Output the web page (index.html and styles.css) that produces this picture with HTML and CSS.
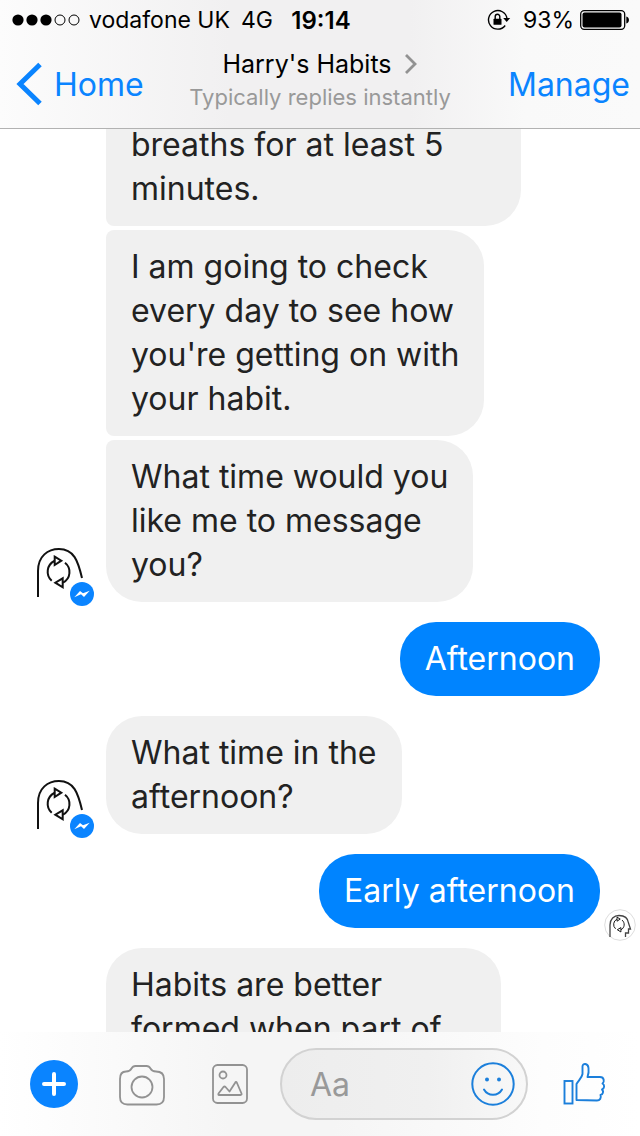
FILE: index.html
```html
<!DOCTYPE html>
<html lang="en">
<head>
<meta charset="utf-8">
<meta name="viewport" content="width=device-width">
<title>Harry's Habits</title>
<link rel="stylesheet" href="styles.css">
</head>
<body>
<svg class="defs" aria-hidden="true">
  <symbol id="cycle" viewBox="0 0 60 60">
    <g fill="none" stroke="#111" stroke-width="2">
      <path d="M15.7 34.7A12 12 0 0 1 18.3 15M29 16.7A12 12 0 0 1 27 36.7"/>
      <path fill="#fff" d="M18.7 10.7 25.3 14.7 18.7 19ZM26.7 32.3V41.3L19.3 36.7Z"/>
    </g>
  </symbol>
  <symbol id="avatar" viewBox="0 0 60 60">
    <path d="M2 51V25C2 10 12 3 23 3C38 3 42 15 46 32" fill="none" stroke="#111" stroke-width="2"/>
    <use href="#cycle" width="60" height="60"/>
    <circle cx="46" cy="48" r="12" fill="#0a84ff"/>
    <path d="M38.3 51.3 44 45 47 47.3 53.7 44.7 48 50.9 45 48.3Z" fill="#fff"/>
  </symbol>
</svg>

<header class="header">
  <div class="status">
    <div class="status-left">
      <svg width="68" height="12" viewBox="0 0 68 12" role="img" aria-label="Signal">
        <circle cx="6" cy="6" r="5.6"/><circle cx="20" cy="6" r="5.6"/><circle cx="34" cy="6" r="5.6"/>
        <circle cx="48" cy="6" r="5" fill="none" stroke="#000"/><circle cx="62" cy="6" r="5" fill="none" stroke="#000"/>
      </svg>
      <span>vodafone UK</span>
      <span class="network">4G</span>
    </div>
    <strong class="clock">19:14</strong>
    <div class="status-right">
      <svg width="24" height="22" viewBox="0 0 24 22" role="img" aria-label="Rotation lock">
        <path d="M18.2 16.5A9.3 9.3 0 1 1 20 9.5" fill="none" stroke="#000" stroke-width="1.4"/>
        <path d="M16.2 9H23.2L19.7 13Z"/>
        <rect x="6.5" y="9.8" width="8" height="6" rx=".6"/>
        <path d="M8.2 10V7.6a2.3 2.3 0 0 1 4.6 0V10" fill="none" stroke="#000" stroke-width="1.4"/>
      </svg>
      <span class="charge">93%</span>
      <svg width="50" height="20" viewBox="0 0 50 20" role="img" aria-label="Battery">
        <rect x=".7" y=".7" width="44" height="18.6" rx="3.5" fill="none" stroke="#000" stroke-width="1.3"/>
        <rect x="2.5" y="2.5" width="39" height="15" rx="2"/>
        <path d="M46.3 6.5C49.8 7 49.8 13 46.3 13.5Z"/>
      </svg>
    </div>
  </div>
  <nav class="nav">
    <a class="nav-link nav-start" href="#home">
      <svg width="26" height="44" viewBox="0 0 26 44" aria-hidden="true"><path d="M24 2.5 4 22 24 41.5" fill="none" stroke="#0a84ff" stroke-width="5"/></svg>
      Home
    </a>
    <div class="heading">
      <a class="title" href="#profile">Harry's Habits
        <svg width="14" height="22" viewBox="0 0 14 22" aria-hidden="true"><path d="M2 2 11 11 2 20" fill="none" stroke="#929292" stroke-width="2.8"/></svg>
      </a>
      <p class="subtitle">Typically replies instantly</p>
    </div>
    <a class="nav-link nav-end" href="#manage">Manage</a>
  </nav>
</header>

<main class="chat">
  <div class="thread">
    <div class="received">
      <div class="stack">
        <p class="bubble joined-top joined-bottom scrolled">breaths for at least 5<br>minutes.</p>
        <p class="bubble joined-top joined-bottom">I am going to check<br>every day to see how<br>you're getting on with<br>your habit.</p>
        <p class="bubble joined-top">What time would you<br>like me to message<br>you?</p>
      </div>
      <svg class="avatar" role="img" aria-label="Harry's Habits"><use href="#avatar"/></svg>
    </div>
    <div class="sent"><p class="bubble bubble-sent">Afternoon</p></div>
    <div class="received">
      <div class="stack"><p class="bubble">What time in the<br>afternoon?</p></div>
      <svg class="avatar" role="img" aria-label="Harry's Habits"><use href="#avatar"/></svg>
    </div>
    <div class="sent">
      <p class="bubble bubble-sent">Early afternoon</p>
      <svg class="seen" viewBox="0 0 32 32" role="img" aria-label="Seen">
        <circle cx="16" cy="16" r="15.3" fill="#fff" stroke="#ddd"/>
        <path d="M6 28V16C6 10 10 6.5 15 6.5C21 6.5 24 10 24.5 14L26.5 20H24.5V24H21.5V28" fill="none" stroke="#444" stroke-width="1.3"/>
        <use href="#cycle" x="4" y="3" width="29" height="29"/>
      </svg>
    </div>
    <div class="received">
      <div class="stack"><p class="bubble scrolled-end">Habits are better<br>formed when part of</p></div>
    </div>
  </div>
</main>

<footer class="composer">
  <div class="tools">
    <button class="tool" type="button" aria-label="More">
      <svg viewBox="0 0 48 48"><circle cx="24" cy="24" r="24" fill="#0a84ff"/><path d="M24 14V34M14 24H34" stroke="#fff" stroke-width="4" stroke-linecap="round"/></svg>
    </button>
    <button class="tool" type="button" aria-label="Camera">
      <svg viewBox="0 0 48 48" fill="none" stroke="#929292" stroke-width="1.8"><path d="M8 11.5C11 11.5 12.5 10.5 13.5 8.5C14.5 6.6 15.5 6 17.5 6H28.5C30.5 6 31.5 6.6 32.5 8.5C33.5 10.5 35 11.5 38 11.5Q46 11.5 46 19V37Q46 44.5 38.500 44.500H9.500Q2 44.500 2 37V19Q2 11.500 8 11.500Z"/><circle cx="24" cy="27" r="10.500"/></svg>
    </button>
    <button class="tool" type="button" aria-label="Photos">
      <svg viewBox="0 0 48 48" fill="none" stroke="#929292" stroke-width="1.8" stroke-linejoin="round"><rect x="7" y="5" width="34" height="38" rx="4.500"/><circle cx="17" cy="15" r="3.500"/><path d="M13 35H34.500Q36 35 35.500 33.500L31 23Q30 21 29 23L23.500 31.500 19.500 27Q18.500 26 17.500 27L12.500 33.500Q12 35 13 35Z"/></svg>
    </button>
  </div>
  <div class="field">
    <input class="input" type="text" placeholder="Aa" aria-label="Message">
    <button class="emoji" type="button" aria-label="Emoji">
      <svg viewBox="0 0 44 44" fill="none" stroke="#1b7fdb" stroke-width="2"><circle cx="22" cy="22" r="20.700"/><path d="M13 27.500C17 34.500 27 34.500 31 27.500" stroke-linecap="round"/><circle cx="16" cy="17.500" r="2" fill="#1b7fdb" stroke="none"/><circle cx="28" cy="17.500" r="2" fill="#1b7fdb" stroke="none"/></svg>
    </button>
  </div>
  <button class="tool" type="button" aria-label="Like">
    <svg viewBox="0 0 48 48" fill="none" stroke="#1b7fdb" stroke-width="1.900"><rect x="4.500" y="21" width="8" height="22.500"/><path stroke-linejoin="round" d="M16.500 40V24C19 20 22 17.500 22.500 14V6.500C22.500 3 28 3 28.500 8C29 12 28.500 14.500 27.500 17H40C44.500 17 44.500 22 42.500 23.500C45 25 44.500 28.500 42 29.500C44 31.500 43 34.500 40.500 35C41.500 38 40 40.500 37 40.500Z"/></svg>
  </button>
</footer>
</body>
</html>
```

FILE: styles.css
```css
* { box-sizing: border-box; }

body {
  margin: 0;
  height: 100vh;
  display: flex;
  flex-direction: column;
  background: #fff;
  color: #222;
  font-family: Inter, "Liberation Sans", sans-serif;
}

p { margin: 0; }
a { color: inherit; text-decoration: none; }
svg { display: block; flex: none; }
button { padding: 0; border: 0; background: none; }
.defs { position: absolute; width: 0; height: 0; }

.header {
  flex: none;
  border-bottom: 1px solid #b2b2b2;
  background: linear-gradient(90deg, #fcfcfc, #f1f0f1 36%, #f1f0f1 64%, #f9f9f9 82%, #fafafa);
  color: #000;
}

.status {
  display: grid;
  grid-template-columns: 1fr auto 1fr;
  align-items: center;
  height: 40px;
  padding: 0 10px 0 12px;
  font-size: 23px;
}
.status-left, .status-right { display: flex; align-items: center; }
.status-left { gap: 9px; }
.network { margin-left: 2px; }
.clock { font-size: 24px; font-weight: 600; }
.status-right { justify-content: flex-end; }
.charge { margin: 0 6px 0 12px; }

.nav {
  display: grid;
  grid-template-columns: 1fr auto 1fr;
  align-items: center;
  height: 88px;
  padding: 0 10px;
}
.nav-link {
  display: flex;
  align-items: center;
  gap: 12px;
  color: #0a84ff;
  font-size: 32px;
}
.nav-start { padding-left: 6px; }
.nav-end { justify-content: flex-end; }
.heading { padding-bottom: 8px; text-align: center; }
.title {
  display: flex;
  justify-content: center;
  align-items: center;
  gap: 12px;
  font-size: 25px;
  line-height: 34px;
}
.subtitle { color: #999; font-size: 22px; line-height: 32px; }

.chat { flex: 1; min-height: 0; overflow: hidden; }
.thread {
  display: flex;
  flex-direction: column;
  gap: 20px;
  margin-top: -21px;
}
.received { position: relative; padding-left: 106px; }
.stack {
  display: flex;
  flex-direction: column;
  align-items: flex-start;
  gap: 4px;
}
.avatar {
  position: absolute;
  left: 36px;
  bottom: -4px;
  width: 60px;
  height: 60px;
}
.bubble {
  padding: 15px 25px;
  border-radius: 36px;
  background: #f0f0f0;
  font-size: 32px;
  line-height: 44px;
  white-space: nowrap;
}
.joined-top { border-top-left-radius: 8px; }
.joined-bottom { border-bottom-left-radius: 8px; }
.scrolled { min-width: 415px; border-top-right-radius: 8px; }
.scrolled-end { min-width: 395px; }
.sent {
  position: relative;
  display: flex;
  justify-content: flex-end;
  padding-right: 40px;
}
.bubble-sent { background: #0084ff; color: #fff; }
.seen {
  position: absolute;
  right: 4px;
  bottom: -13px;
  width: 32px;
  height: 32px;
}

.composer {
  flex: none;
  display: flex;
  align-items: center;
  gap: 32px;
  padding: 16px 32px 16px 30px;
  background: linear-gradient(90deg, #fff, #f5f5f5 36%, #f5f5f5 52%, #fdfdfd 85%, #fff);
}
.tools { display: flex; gap: 40px; margin-right: -6px; }
.tool { width: 48px; height: 48px; }
.field {
  flex: 1;
  min-width: 0;
  display: flex;
  align-items: center;
  height: 72px;
  padding: 0 11px 0 28px;
  border: 2px solid #d2d2d2;
  border-radius: 36px;
  background: linear-gradient(90deg, #ededed, #f0f0f0 60%, #f8f8f8);
}
.input {
  flex: 1;
  min-width: 0;
  padding: 0;
  border: 0;
  outline: 0;
  background: none;
  font: inherit;
  font-size: 32px;
}
.input::placeholder { color: #999; opacity: 1; }
.emoji { width: 44px; height: 44px; }
```
